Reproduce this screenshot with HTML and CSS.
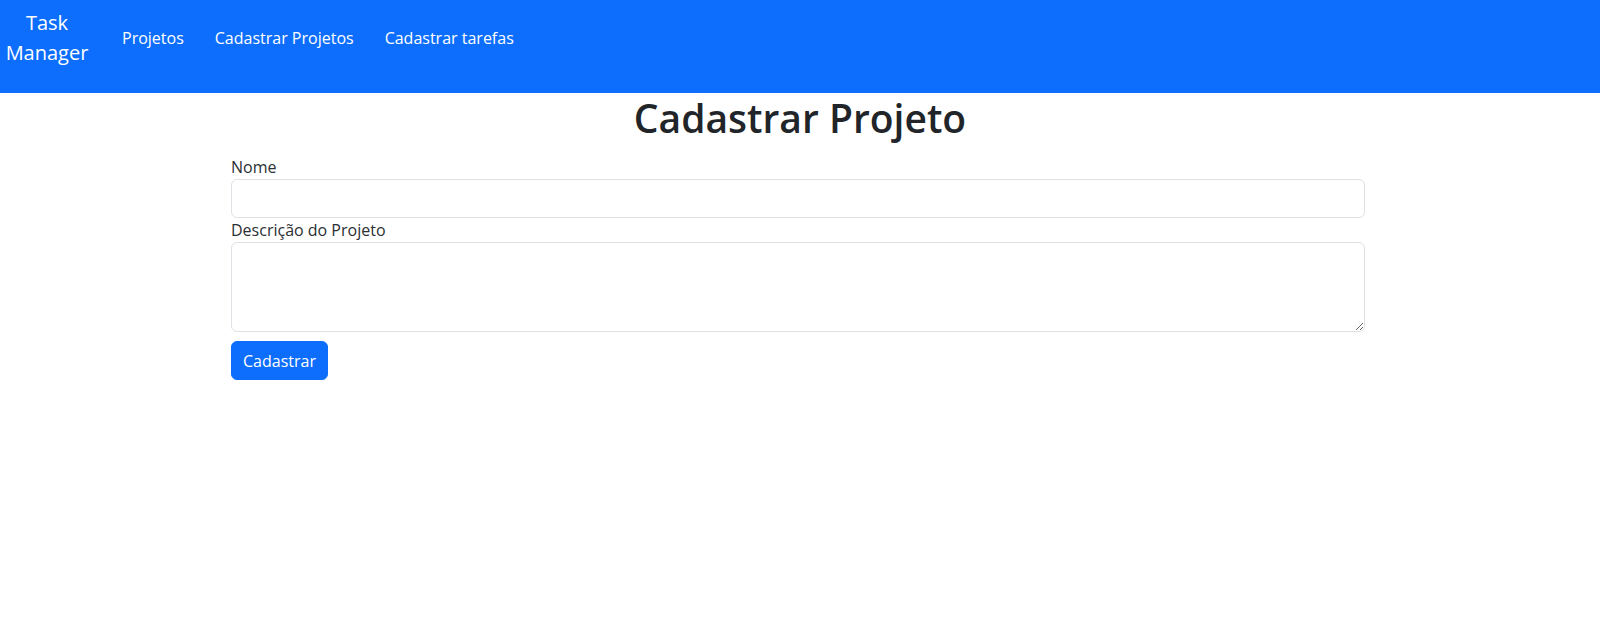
FILE: index.html
```html
<!DOCTYPE html>
<html lang="pt-BR">
<head>
<meta charset="utf-8">
<title>Cadastrar Projeto</title>
<link rel="stylesheet" href="styles.css">
</head>
<body>
<nav class="navbar">
  <a class="brand" href="#">Task Manager</a>
  <ul class="nav-links">
    <li><a href="#">Projetos</a></li>
    <li><a href="#">Cadastrar Projetos</a></li>
    <li><a href="#">Cadastrar tarefas</a></li>
  </ul>
</nav>
<main class="page">
  <h1 class="title">Cadastrar Projeto</h1>
  <form class="form">
    <label class="label" for="nome">Nome</label>
    <input class="control" id="nome" type="text">
    <label class="label" for="desc">Descrição do Projeto</label>
    <textarea class="control area" id="desc"></textarea>
    <div class="actions"><button class="btn" type="button">Cadastrar</button></div>
  </form>
</main>
</body>
</html>
```
FILE: styles.css
```css
* { box-sizing: border-box; }
html, body { margin: 0; padding: 0; }
body {
  font-family: "Open Sans", "Noto Sans", "Liberation Sans", sans-serif;
  font-size: 16px;
  line-height: 24px;
  color: #212529;
  background: #fff;
}
.navbar {
  display: flex;
  align-items: center;
  height: 93px;
  padding: 5px 0 22px 0;
  background: #0d6efd;
}
.brand {
  width: 94px;
  text-align: center;
  font-size: 20px;
  line-height: 30px;
  color: #fff;
  text-decoration: none;
  margin-right: 20px;
}
.nav-links {
  display: flex;
  gap: 15px;
  list-style: none;
  margin: 0;
  padding: 0;
}
.nav-links a {
  display: block;
  padding: 0 8px;
  color: #fff;
  text-decoration: none;
  font-size: 16px;
  line-height: 24px;
}
.page {
  padding: 1px 0 0 0;
}
.title {
  margin: 0 0 13px 0;
  text-align: center;
  font-size: 39px;
  line-height: 48px;
  font-weight: 600;
}
.form {
  display: flex;
  flex-direction: column;
  margin: 0 235px 0 231px;
}
.label {
  display: block;
  line-height: 24px;
  color: #2b2f33;
}
.control {
  display: block;
  width: 100%;
  height: 39px;
  border: 1px solid #dee2e6;
  border-radius: 6px;
  padding: 6px 12px;
  font: inherit;
  color: #212529;
  background: #fff;
}
.area {
  height: 90px;
  resize: vertical;
}
.actions {
  margin-top: 9px;
}
.btn {
  width: 97px;
  height: 39px;
  border: 1px solid #0d6efd;
  border-radius: 6px;
  background: #0d6efd;
  color: #fff;
  font: inherit;
  padding: 0;
}
```
